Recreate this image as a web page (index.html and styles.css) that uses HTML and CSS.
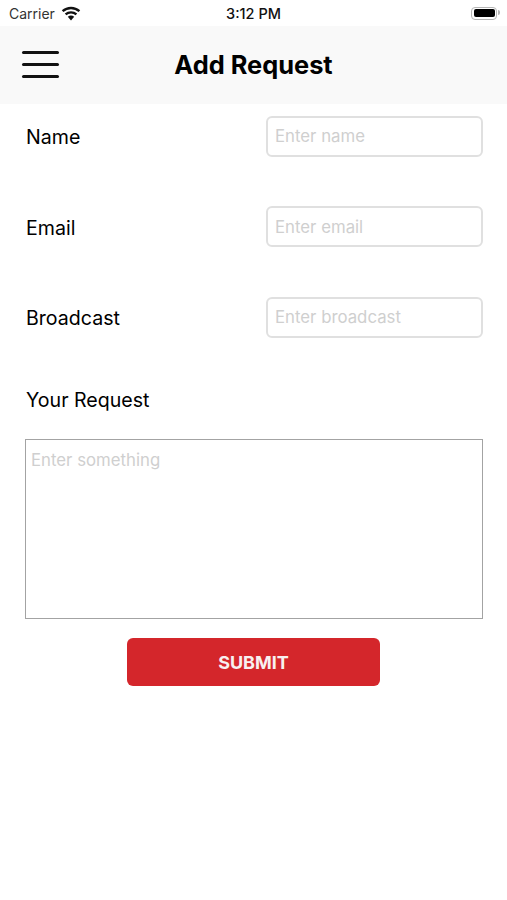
FILE: index.html
```html
<!DOCTYPE html>
<html lang="en">
<head>
    <meta charset="UTF-8">
    <meta name="viewport" content="width=device-width, initial-scale=1.0">
    <title>Add Request</title>
    <link rel="stylesheet" href="styles.css">
</head>
<body>
    <div class="status-bar">
        <div class="status-left">
            <span class="carrier">Carrier</span>
            <svg class="wifi" width="20" height="15" viewBox="0 0 20 15">
                <path d="M10 14.5 L6.8 10.8 A5 5 0 0 1 13.2 10.8 Z" fill="#111"/>
                <path d="M4.6 8.4 A8.2 8.2 0 0 1 15.4 8.4" fill="none" stroke="#111" stroke-width="2.4"/>
                <path d="M1.6 5.2 A12.6 12.6 0 0 1 18.4 5.2" fill="none" stroke="#111" stroke-width="2.4"/>
            </svg>
        </div>
        <span class="time">3:12 PM</span>
        <div class="battery"><div class="battery-level"></div></div>
    </div>

    <div class="nav-bar">
        <div class="menu-icon">
            <span></span>
            <span></span>
            <span></span>
        </div>
        <h1 class="nav-title">Add Request</h1>
    </div>

    <form class="form">
        <div class="row">
            <label class="label">Name</label>
            <input class="input" type="text" placeholder="Enter name">
        </div>
        <div class="row">
            <label class="label">Email</label>
            <input class="input" type="text" placeholder="Enter email">
        </div>
        <div class="row">
            <label class="label">Broadcast</label>
            <input class="input" type="text" placeholder="Enter broadcast">
        </div>
        <label class="label request-label">Your Request</label>
        <textarea class="textarea" placeholder="Enter something"></textarea>
        <button class="submit" type="button">SUBMIT</button>
    </form>
</body>
</html>
```

FILE: styles.css
```css
body {
    margin: 0;
    height: 900px;
    overflow: hidden;
    font-family: Inter, "Liberation Sans", sans-serif;
    background-color: #fff;
    color: #000;
}

.status-bar {
    display: flex;
    justify-content: space-between;
    align-items: center;
    height: 26px;
    padding: 0 10px 0 9px;
    position: relative;
    box-sizing: border-box;
}

.status-left {
    display: flex;
    align-items: center;
    gap: 6px;
}

.carrier {
    font-size: 14px;
    color: #333;
}

.time {
    position: absolute;
    left: 0;
    right: 0;
    text-align: center;
    font-size: 14.5px;
    font-weight: 500;
    color: #111;
}

.battery {
    position: relative;
    width: 26px;
    height: 13px;
    box-sizing: border-box;
    border: 1.5px solid #b5b5b5;
    border-radius: 4px;
    padding: 1.5px;
}

.battery::after {
    content: "";
    position: absolute;
    right: -3.5px;
    top: 2.5px;
    width: 2px;
    height: 5px;
    border-radius: 0 2px 2px 0;
    background-color: #b5b5b5;
}

.battery-level {
    height: 100%;
    background-color: #000;
    border-radius: 2px;
}

.nav-bar {
    display: flex;
    align-items: center;
    height: 78px;
    padding-left: 22px;
    position: relative;
    background-color: #f9f9f9;
}

.menu-icon {
    display: flex;
    flex-direction: column;
    gap: 9px;
    width: 37px;
    margin-top: -2px;
}

.menu-icon span {
    height: 3px;
    border-radius: 2px;
    background-color: #111;
}

.nav-title {
    position: absolute;
    left: 0;
    right: 0;
    margin: -1px 0 0;
    text-align: center;
    font-size: 25.4px;
    font-weight: 700;
}

.form {
    display: flex;
    flex-direction: column;
    padding: 11.9px 24px 0 25px;
}

.row {
    display: flex;
    justify-content: space-between;
    align-items: center;
    height: 41px;
    margin-bottom: 49.5px;
}

.row .label {
    margin-top: 2px;
}

.label {
    font-size: 19.6px;
    margin-left: 1px;
}

.input {
    width: 217px;
    height: 41px;
    box-sizing: border-box;
    padding: 0 7px;
    border: 2px solid #e0e0e0;
    border-radius: 6px;
    outline: none;
    font-family: inherit;
    font-size: 16.8px;
}

.input::placeholder,
.textarea::placeholder {
    color: #cfcfcf;
    opacity: 1;
}

.request-label {
    margin-top: 1px;
    line-height: 24px;
}

.textarea {
    display: block;
    height: 180px;
    margin-top: 27px;
    box-sizing: border-box;
    padding: 10px 5px;
    border: 1px solid #a3a3a3;
    outline: none;
    resize: none;
    font-family: inherit;
    font-size: 16.8px;
}

.submit {
    align-self: center;
    width: 253px;
    height: 48px;
    margin-top: 19px;
    margin-right: 1px;
    border: none;
    border-radius: 6px;
    background-color: #d4262b;
    color: #f8f0f0;
    font-family: inherit;
    font-size: 18px;
    font-weight: 700;
}
```
